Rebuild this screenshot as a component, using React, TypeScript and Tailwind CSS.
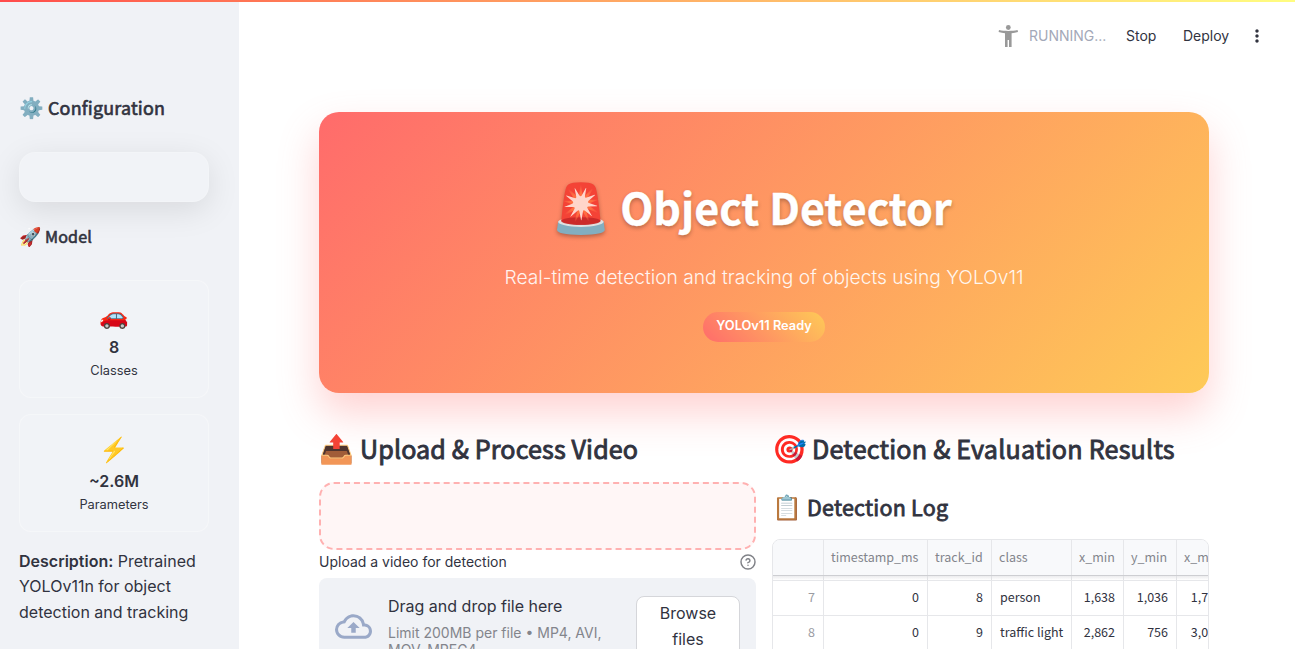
import type { ReactNode } from 'react';

const source = "font-['Noto_Sans_CJK_SC','Noto_Color_Emoji',sans-serif]";

function Metric({ icon, value, label }: { icon: string; value: string; label: string }) {
  return (
    <div className="flex h-[118px] flex-col items-center rounded-xl border border-white/30 bg-white/10 pt-[20px]">
      <div className="h-[29px] text-[24px] leading-[29px]">{icon}</div>
      <div className="mt-[5px] h-[25px] text-[16px] leading-[24px] font-semibold">{value}</div>
      <div className="text-[12.8px] leading-[22px]">{label}</div>
    </div>
  );
}

function Heading({ icon, iconClass, textClass, children }: { icon: string; iconClass: string; textClass: string; children: ReactNode }) {
  return (
    <div className={`flex items-center whitespace-nowrap ${source}`}>
      <span className={iconClass}>{icon}</span>
      <span className={textClass}>{children}</span>
    </div>
  );
}

const columns = [
  { name: '', width: 'w-[51px]' },
  { name: 'timestamp_ms', width: 'w-[104px]' },
  { name: 'track_id', width: 'w-[64px]' },
  { name: 'class', width: 'w-[80px]' },
  { name: 'x_min', width: 'w-[52px]' },
  { name: 'y_min', width: 'w-[53px]' },
  { name: 'x_max', width: 'w-[54px]' },
];

const rows = [
  ['7', '0', '8', 'person', '1,638', '1,036', '1,719'],
  ['8', '0', '9', 'traffic light', '2,862', '756', '3,012'],
];

export default function App() {
  return (
    <div className="relative flex h-[649px] w-[1295px] overflow-hidden bg-white font-['Inter','Noto_Color_Emoji',sans-serif] text-[#31333f]">
      <div className="absolute inset-x-0 top-0 z-20 h-[2px] bg-linear-to-r from-[#ff4b4b] to-[#fffd80]" />

      <aside className="flex w-[239px] shrink-0 flex-col bg-[#f0f2f6] pr-[30px] pl-[19px] pt-[92px]">
        <Heading icon="⚙️" iconClass="w-[29px] text-[20px] leading-[30px]" textClass="text-[17.9px] leading-[30px] tracking-[0.2px] [-webkit-text-stroke:0.65px_#31333f]">
          Configuration
        </Heading>
        <div className="mt-[30px] h-[50px] rounded-2xl border border-white/20 bg-[#f1f3f7] shadow-[0_8px_32px_rgba(0,0,0,0.1)]" />
        <div className="mt-[20px]">
          <Heading icon="🚀" iconClass="w-[26px] pb-[2px] text-[18px] leading-[26px]" textClass="text-[16.1px] leading-[28px] tracking-[0.15px] [-webkit-text-stroke:0.6px_#31333f]">
            Model
          </Heading>
        </div>
        <div className="mt-[30px] flex flex-col gap-4">
          <Metric icon="🚗" value="8" label="Classes" />
          <Metric icon="⚡" value="~2.6M" label="Parameters" />
        </div>
        <p className="mt-[16.6px] text-[16px] leading-[25.6px] whitespace-nowrap">
          <strong className="font-semibold">Description:</strong> Pretrained
          <br />
          YOLOv11n for object
          <br />
          detection and tracking
        </p>
      </aside>

      <main className="flex w-[1056px] shrink-0 flex-col">
        <header className="flex h-[72px] shrink-0 items-center justify-end pr-[28px] text-[14px]">
          <svg className="size-[24px]" viewBox="0 0 24 24" fill="#999999">
            <circle cx="12.3" cy="3.5" r="2.4" />
            <path d="M3 6c3 .7 6 .9 9.300.9S18.700 6.700 21.600 6l.4 2c-2.200.6-4.300 1-6.400 1.200V23h-2.600v-7h-1.400v7H9V9.200C6.900 9 4.800 8.600 2.600 8z" />
          </svg>
          <span className="ml-[9px] w-[78px] pb-[2px] text-[#a3a8b8]">RUNNING...</span>
          <span className="ml-[19px] w-[31px] pb-[2px]">Stop</span>
          <span className="ml-[26px] w-[47px] pb-[2px]">Deploy</span>
          <svg className="ml-[17px] size-[20px]" viewBox="0 0 24 24" fill="#31333f">
            <path d="M12 8c1.1 0 2-.9 2-2s-.9-2-2-2-2 .9-2 2 .9 2 2 2zm0 2c-1.1 0-2 .9-2 2s.9 2 2 2 2-.9 2-2-.9-2-2-2zm0 6c-1.1 0-2 .9-2 2s.9 2 2 2 2-.9 2-2-.9-2-2-2z" />
          </svg>
        </header>

        <div className="flex flex-col pt-[40px] pr-[86px] pl-[80px]">
          <section className="flex h-[281px] flex-col items-center rounded-[20px] bg-linear-[135deg,#ff6b6b,#feca57] pt-[64px] text-white shadow-[0_20px_40px_rgba(255,107,107,0.3)]">
            <h1 className={`flex h-[60px] items-center whitespace-nowrap pr-[25px] font-bold [text-shadow:0_2px_4px_rgba(0,0,0,0.3)] ${source}`}>
              <span className="w-[69px] pb-[4px] text-[48px] leading-[60px]">🚨</span>
              <span className="text-[43px] leading-[60px] [-webkit-text-stroke:0.4px_white]">Object Detector</span>
            </h1>
            <p className="mt-[26px] h-[31px] text-[19.2px] leading-[31px] font-light opacity-90">
              Real-time detection and tracking of objects using YOLOv11
            </p>
            <span className="mt-[19px] flex h-[30px] w-[122px] items-center justify-center rounded-full bg-linear-[45deg,#ff6b6b,#feca57] pb-[2px] text-[12.8px] font-semibold">
              YOLOv11 Ready
            </span>
          </section>

          <div className="mt-[33px] flex gap-4">
            <section className="w-[437px] shrink-0">
              <Heading icon="📤" iconClass="w-[41px] pb-[1px] text-[28px] leading-[42px]" textClass="text-[25.1px] leading-[42px] tracking-[0.13px] [-webkit-text-stroke:0.9px_#31333f]">
                Upload &amp; Process Video
              </Heading>
              <div className="mt-[13px] h-[68px] rounded-[15px] border-2 border-dashed border-[#ffb1b1] bg-[#fff6f6]" />
              <div className="flex h-[28px] items-center justify-between pb-[5px] text-[14px]">
                <span>Upload a video for detection</span>
                <svg className="size-[16px]" viewBox="0 0 24 24" fill="none" stroke="#808288" strokeWidth="2.2" strokeLinecap="round" strokeLinejoin="round">
                  <circle cx="12" cy="12" r="10.5" />
                  <path d="M9.09 9a3 3 0 0 1 5.83 1c0 2-3 3-3 3" />
                  <path d="M12 17h.01" />
                </svg>
              </div>
              <div className="flex h-[98px] items-center rounded-lg bg-[#f0f2f6] px-4">
                <svg className="mb-[2px] size-[37px] shrink-0" viewBox="0 0 24 24" fill="#9aa9c8">
                  <path d="M19.35 10.04A7.49 7.49 0 0 0 12 4C9.11 4 6.6 5.64 5.35 8.04A5.994 5.994 0 0 0 0 14c0 3.31 2.69 6 6 6h13c2.76 0 5-2.24 5-5 0-2.64-2.05-4.78-4.65-4.96zM19 18H6c-2.21 0-4-1.79-4-4 0-2.05 1.53-3.76 3.56-3.97l1.07-.11.5-.95A5.469 5.469 0 0 1 12 6c2.62 0 4.88 1.86 5.39 4.43l.3 1.5 1.53.11A2.98 2.98 0 0 1 22 15c0 1.65-1.35 3-3 3zM8 13h2.55v3h2.9v-3H16l-4-4-4 4z" />
                </svg>
                <div className="ml-[16px] flex flex-1 flex-col pb-[4px]">
                  <span className="text-[16px] leading-[26px]">Drag and drop file here</span>
                  <span className="mt-[5px] text-[14px] leading-[17px] text-[#83858c]">
                    Limit 200MB per file • MP4, AVI,
                    <br />
                    MOV, MPEG4
                  </span>
                </div>
                <div className="flex h-[62px] w-[104px] items-center justify-center rounded-lg border border-[#d5d6da] bg-white text-center text-[16px] leading-[25.6px]">
                  Browse
                  <br />
                  files
                </div>
              </div>
            </section>

            <section className="w-[437px] shrink-0">
              <Heading icon="🎯" iconClass="w-[40px] pb-[1px] text-[28px] leading-[42px]" textClass="text-[25.1px] leading-[42px] tracking-[0.23px] [-webkit-text-stroke:0.9px_#31333f]">
                Detection &amp; Evaluation Results
              </Heading>
              <div className="mt-[19px]">
                <Heading icon="📋" iconClass="w-[35px] pb-[1px] text-[24px] leading-[36px]" textClass="text-[21.5px] leading-[36px] tracking-[0.22px] [-webkit-text-stroke:0.8px_#31333f]">
                  Detection Log
                </Heading>
              </div>
              <div className={`mt-[14px] h-[200px] overflow-hidden rounded-lg border border-[#e6e7ea] text-[12.5px] ${source}`}>
                <div className="flex h-[36px] w-max border-b border-[#cdced2] bg-[#f8f9fb] text-[#83858c]">
                  {columns.map((c, i) => (
                    <div key={i} className={`flex items-center border-r border-[#e6e7ea] px-[7px] ${c.width}`}>
                      {c.name}
                    </div>
                  ))}
                </div>
                <div className="flex h-[5px] w-max border-b border-[#e6e7ea] bg-linear-to-b from-[#ececee] to-white">
                  {columns.map((c, i) => (
                    <div key={i} className={`border-r border-[#e0e1e4] ${c.width}`} />
                  ))}
                </div>
                {rows.map((r) => (
                  <div key={r[0]} className="flex h-[35px] w-max border-b border-[#e6e7ea]">
                    {r.map((v, i) => (
                      <div
                        key={i}
                        className={`flex items-center border-r border-[#e6e7ea] pr-[8px] pb-[2px] pl-[8px] whitespace-nowrap ${columns[i].width} ${i === 3 ? 'justify-start' : 'justify-end'} ${i === 0 ? 'text-[#9a9ba2]' : ''}`}
                      >
                        {v}
                      </div>
                    ))}
                  </div>
                ))}
              </div>
            </section>
          </div>
        </div>
      </main>
    </div>
  );
}
